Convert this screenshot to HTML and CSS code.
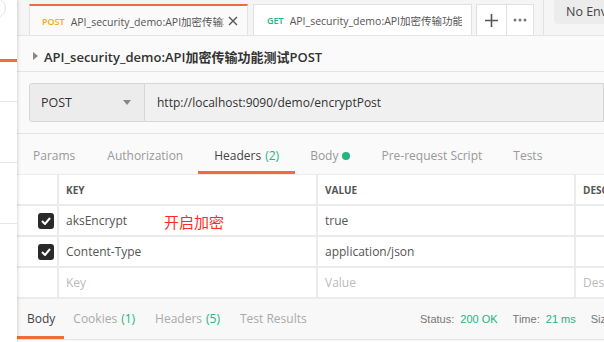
FILE: index.html
```html
<!DOCTYPE html>
<html lang="zh">
<head>
    <meta charset="UTF-8">
    <title>Postman - API_security_demo</title>
    <link rel="stylesheet" href="styles.css">
</head>
<body>
    <div class="app">
        <aside class="sidebar">
            <div class="side-search"></div>
            <div class="side-tab"></div>
            <div class="side-item first"></div>
            <div class="side-item"></div>
            <div class="side-item"></div>
        </aside>

        <main class="main">
            <div class="tabbar">
                <div class="tab active">
                    <span class="method post">POST</span>
                    <span class="tab-name">API_security_demo:API加密传输功能测试POST</span>
                    <span class="tab-close">
                        <svg width="10" height="10" viewBox="0 0 10 10"><path d="M1 1L9 9M9 1L1 9" stroke="#555" stroke-width="1.4" fill="none"/></svg>
                    </span>
                </div>
                <div class="tab">
                    <span class="method get">GET</span>
                    <span class="tab-name">API_security_demo:API加密传输功能测试GET</span>
                </div>
                <div class="tab-btn">
                    <svg width="13" height="13" viewBox="0 0 13 13"><path d="M6.5 0V13M0 6.5H13" stroke="#555" stroke-width="1.6"/></svg>
                </div>
                <div class="tab-btn more">
                    <svg width="14" height="4" viewBox="0 0 14 4"><circle cx="2" cy="2" r="1.5" fill="#777"/><circle cx="7" cy="2" r="1.5" fill="#777"/><circle cx="12" cy="2" r="1.5" fill="#777"/></svg>
                </div>
                <div class="tab-divider"></div>
                <div class="env">No Environment</div>
            </div>

            <div class="title-row">
                <svg class="caret-right" width="5" height="8" viewBox="0 0 5 8"><path d="M0 0L5 4L0 8Z" fill="#888"/></svg>
                <span class="title">API_security_demo:API加密传输功能测试POST</span>
            </div>

            <div class="url-row">
                <div class="method-select">
                    <span>POST</span>
                    <svg width="8" height="5" viewBox="0 0 8 5"><path d="M0 0H8L4 5Z" fill="#888"/></svg>
                </div>
                <div class="url-input">http://localhost:9090/demo/encryptPost</div>
            </div>

            <nav class="req-tabs">
                <span class="req-tab">Params</span>
                <span class="req-tab">Authorization</span>
                <span class="req-tab current">Headers <em class="count">(2)</em></span>
                <span class="req-tab">Body <i class="dot"></i></span>
                <span class="req-tab">Pre-request Script</span>
                <span class="req-tab">Tests</span>
            </nav>

            <div class="headers-table">
                <div class="row head">
                    <div class="cell check"></div>
                    <div class="cell key">KEY</div>
                    <div class="cell value">VALUE</div>
                    <div class="cell desc">DESCRIPTION</div>
                </div>
                <div class="row">
                    <div class="cell check"><span class="box"><svg width="10" height="8" viewBox="0 0 10 8"><path d="M1 4L4 7L9 1" stroke="#fff" stroke-width="2" fill="none"/></svg></span></div>
                    <div class="cell key">aksEncrypt<span class="note">开启加密</span></div>
                    <div class="cell value">true</div>
                    <div class="cell desc"></div>
                </div>
                <div class="row">
                    <div class="cell check"><span class="box"><svg width="10" height="8" viewBox="0 0 10 8"><path d="M1 4L4 7L9 1" stroke="#fff" stroke-width="2" fill="none"/></svg></span></div>
                    <div class="cell key">Content-Type</div>
                    <div class="cell value">application/json</div>
                    <div class="cell desc"></div>
                </div>
                <div class="row">
                    <div class="cell check"></div>
                    <div class="cell key placeholder">Key</div>
                    <div class="cell value placeholder">Value</div>
                    <div class="cell desc placeholder">Description</div>
                </div>
            </div>

            <div class="response-bar">
                <span class="res-tab current">Body</span>
                <span class="res-tab">Cookies <em class="count">(1)</em></span>
                <span class="res-tab">Headers <em class="count">(5)</em></span>
                <span class="res-tab">Test Results</span>
                <div class="res-meta">
                    <span>Status: <b>200 OK</b></span>
                    <span>Time: <b>21 ms</b></span>
                    <span>Size: <b>205 B</b></span>
                </div>
            </div>
        </main>
    </div>
</body>
</html>
```

FILE: styles.css
```css
* {
    margin: 0;
    padding: 0;
    box-sizing: border-box;
}

body {
    font-family: 'Open Sans', 'Noto Sans CJK SC', sans-serif;
    font-size: 12px;
    color: #333;
    background-color: #fafafa;
    overflow: hidden;
}

.app {
    display: flex;
    width: 604px;
    height: 342px;
    overflow: hidden;
}

/* left sidebar, only its edge is visible */
.sidebar {
    width: 17px;
    flex-shrink: 0;
    background: #fff;
    box-shadow: 1px 0 3px rgba(0, 0, 0, 0.15);
    position: relative;
    z-index: 2;
}

.side-search {
    height: 20px;
    margin-top: -2px;
    margin-left: -20px;
    width: 26px;
    border: 1px solid #e2e2e2;
    border-radius: 0 13px 13px 0;
}

.side-tab {
    height: 44px;
    border-bottom: 3px solid #f26b3a;
}

.side-item {
    height: 61px;
    border-bottom: 1px solid #e6e6e6;
}

.side-item.first {
    height: 40px;
}

.main {
    flex: 1;
    min-width: 0;
    display: flex;
    flex-direction: column;
    background: #fafafa;
}

/* request tabs row */
.tabbar {
    height: 36px;
    display: flex;
    align-items: flex-end;
    padding-left: 12px;
    background: #f5f5f5;
    border-bottom: 1px solid #e4e4e4;
    white-space: nowrap;
    overflow: hidden;
}

.tab {
    width: 219px;
    height: 31px;
    flex-shrink: 0;
    display: flex;
    align-items: center;
    padding: 0 9px 0 12px;
    background: #fff;
    border: 1px solid #e2e2e2;
    border-bottom: none;
    margin-right: 5px;
    font-size: 10.5px;
    color: #555;
    overflow: hidden;
}

.tab + .tab {
    padding-left: 13px;
    margin-right: 4px;
}

.tab.active {
    border-top: 2px solid #f26b3a;
    background: #fafafa;
    margin-bottom: -1px;
    height: 32px;
}

.method {
    font-size: 9px;
    font-weight: 600;
    margin-right: 6px;
}

.method.post {
    color: #f5a623;
}

.method.get {
    color: #26b47f;
}

.tab-name {
    flex: 1;
    overflow: hidden;
}

.tab-close {
    display: flex;
    margin-left: 4px;
}

.tab-btn {
    width: 31px;
    height: 31px;
    flex-shrink: 0;
    display: flex;
    align-items: center;
    justify-content: center;
    background: #fff;
    border: 1px solid #e2e2e2;
    border-bottom: none;
}

.tab-btn.more {
    width: 27px;
    border-left: none;
}

.tab-divider {
    align-self: stretch;
    flex-shrink: 0;
    width: 1px;
    background: #e2e2e2;
    margin: 0 10px 0 9px;
}

.env {
    align-self: flex-start;
    flex-shrink: 0;
    height: 24px;
    padding: 3px 0 0 12px;
    width: 120px;
    background: #ececec;
    border-radius: 0 0 0 4px;
    font-size: 12.5px;
    color: #444;
}

.title-row {
    height: 36px;
    display: flex;
    align-items: center;
    padding: 5px 0 0 16px;
    border-bottom: 1px solid #e4e4e4;
}

.caret-right {
    margin-right: 6px;
}

.title {
    font-size: 13px;
    font-weight: 600;
    color: #333;
}

.url-row {
    display: flex;
    padding: 11px 0 11px 12px;
    border-bottom: 1px solid #e4e4e4;
}

.method-select {
    width: 116px;
    height: 39px;
    display: flex;
    align-items: center;
    justify-content: space-between;
    padding: 0 13px 0 11px;
    background: #ececec;
    border: 1px solid #d6d6d6;
    border-radius: 3px 0 0 3px;
    font-size: 12.5px;
}

.url-input {
    flex: 1;
    height: 39px;
    display: flex;
    align-items: center;
    padding-left: 12px;
    background: #f0f0f0;
    border: 1px solid #d6d6d6;
    border-left: none;
    font-size: 12px;
}

.req-tabs {
    height: 40px;
    display: flex;
    align-items: stretch;
}

.req-tab {
    display: flex;
    align-items: center;
    padding: 6px 16px 0;
    color: #999;
    font-size: 12px;
    border-bottom: 3px solid transparent;
    white-space: nowrap;
}

.req-tab:nth-child(n+3) {
    margin-left: -1px;
}

.req-tab.current {
    color: #444;
    border-bottom-color: #f26b3a;
}

.count {
    font-style: normal;
    color: #26b47f;
    margin-left: 4px;
}

.dot {
    display: inline-block;
    width: 8px;
    height: 8px;
    border-radius: 50%;
    background: #26b47f;
    margin-left: 4px;
}

/* headers grid */
.headers-table {
    border-top: 1px solid #ebebeb;
    background: #fafafa;
}

.row {
    display: grid;
    grid-template-columns: 40px 259px 258px 1fr;
    height: 31px;
    border-bottom: 2px solid #ebebeb;
}

.cell {
    display: flex;
    align-items: center;
    padding-left: 7px;
    background: #fff;
    border-left: 2px solid #ebebeb;
    color: #555;
    font-size: 12px;
    white-space: nowrap;
    overflow: hidden;
}

.cell.check {
    border-left: none;
    justify-content: flex-end;
    padding-right: 3px;
}

.row.head .cell {
    font-size: 10px;
    font-weight: 700;
    color: #555;
    padding-top: 1px;
}

.box {
    width: 16px;
    height: 16px;
    border-radius: 3px;
    background: #2a2a2a;
    display: flex;
    align-items: center;
    justify-content: center;
}

.placeholder {
    color: #bbb;
}

.note {
    color: #ff2a2a;
    font-size: 15px;
    margin-left: 37px;
    margin-top: 1px;
}

.response-bar {
    height: 41px;
    display: flex;
    align-items: stretch;
    border-bottom: 1px solid #e4e4e4;
    background: #f8f8f8;
}

.res-tab {
    display: flex;
    align-items: center;
    padding: 2px 9px 0;
    color: #aaa;
    font-size: 12px;
    border-bottom: 3px solid transparent;
    white-space: nowrap;
}

.res-tab:first-child {
    padding-left: 10px;
}

.res-tab:nth-child(n+3) {
    margin-left: 2px;
}

.res-tab.current {
    color: #444;
    border-bottom-color: #f26b3a;
}

.res-meta {
    margin-left: auto;
    display: flex;
    align-items: center;
    gap: 15px;
    font-family: 'Liberation Sans', Arial, sans-serif;
    font-size: 11px;
    color: #777;
    white-space: nowrap;
    margin-right: -46px;
}

.res-meta b {
    font-weight: normal;
    color: #26b47f;
    margin-left: 3px;
}
```
